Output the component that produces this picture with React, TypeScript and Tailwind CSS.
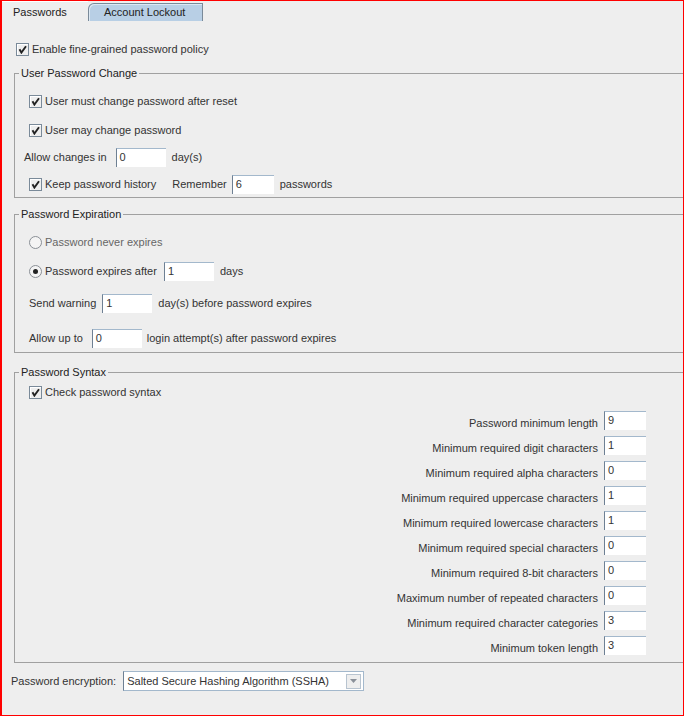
import React from 'react';

const Check = () => (
  <span className="w-[13px] h-[13px] shrink-0 border border-[#7a8a99] bg-[#eeeeee] flex items-center justify-center shadow-[inset_1px_1px_0_#ffffff]">
    <svg width="9" height="9" viewBox="0 0 9 9">
      <path d="M1.5 4.2 L3.4 7.6 L8 1.2" fill="none" stroke="#222" strokeWidth="1.9" />
    </svg>
  </span>
);

const Radio = ({ on }: { on?: boolean }) => (
  <span className="w-[13px] h-[13px] shrink-0 rounded-full border border-[#8a8f96] bg-[#f4f4f4] flex items-center justify-center">
    {on && <span className="w-[5px] h-[5px] rounded-full bg-[#222]" />}
  </span>
);

const Field = ({ value, w }: { value: string; w: string }) => (
  <div className={`${w} h-[19px] shrink-0 bg-white border-t border-l border-t-[#a3b8cc] border-l-[#6e8093] pl-[3px] flex items-center leading-none`}>
    {value}
  </div>
);

const Group = ({ title, className, children }: { title: string; className: string; children: React.ReactNode }) => (
  <fieldset className={`ml-[12px] border-l border-t border-b border-[#a0a0a0] ${className}`}>
    <legend className="ml-[4px] px-[2px] leading-[13px] text-[#222]">{title}</legend>
    {children}
  </fieldset>
);

const syntax = [
  ['Password minimum length', '9'],
  ['Minimum required digit characters', '1'],
  ['Minimum required alpha characters', '0'],
  ['Minimum required uppercase characters', '1'],
  ['Minimum required lowercase characters', '1'],
  ['Minimum required special characters', '0'],
  ['Minimum required 8-bit characters', '0'],
  ['Maximum number of repeated characters', '0'],
  ['Minimum required character categories', '3'],
  ['Minimum token length', '3'],
];

export default function App() {
  return (
    <div className="w-[684px] h-[716px] overflow-hidden bg-[#eeeeee] border-t border-r border-b border-l-2 border-[#ff0000] font-['Liberation_Sans',Arial,sans-serif] text-[11px] text-[#333]">
      {/* tabs */}
      <div className="flex items-end h-[20px]">
        <div className="w-[86px] h-[20px] border-t border-white flex items-center pl-[11px] pt-[2px] text-[#222]">Passwords</div>
        <div className="w-[115px] h-[18px] bg-[#b8cfe5] border-t border-l border-r border-[#7a8a99] rounded-tl-[6px] flex items-center pl-[15px] text-[#222] shadow-[inset_1px_1px_0_#dce8f3]">
          Account Lockout
        </div>
      </div>

      <div className="flex items-center h-[20px] mt-[18px] pl-[14px]">
        <Check />
        <span className="ml-[3px]">Enable fine-grained password policy</span>
      </div>

      <Group title="User Password Change" className="mt-[8px] pb-[3px]">
        <div className="flex items-center h-[20px] mt-[11px] pl-[14px]">
          <Check />
          <span className="ml-[3px]">User must change password after reset</span>
        </div>
        <div className="flex items-center h-[20px] mt-[9px] pl-[14px]">
          <Check />
          <span className="ml-[3px]">User may change password</span>
        </div>
        <div className="flex items-center h-[20px] mt-[7px] pl-[9px]">
          <span>Allow changes in</span>
          <span className="ml-[9px]"><Field value="0" w="w-[50px]" /></span>
          <span className="ml-[6px]">day(s)</span>
        </div>
        <div className="flex items-center h-[20px] mt-[7px] pl-[14px]">
          <Check />
          <span className="ml-[3px]">Keep password history</span>
          <span className="ml-[16px]">Remember</span>
          <span className="ml-[5px]"><Field value="6" w="w-[42px]" /></span>
          <span className="ml-[6px]">passwords</span>
        </div>
      </Group>

      <Group title="Password Expiration" className="mt-[10px] pb-[4px]">
        <div className="flex items-center h-[20px] mt-[11px] pl-[14px]">
          <Radio />
          <span className="ml-[3px] text-[#666]">Password never expires</span>
        </div>
        <div className="flex items-center h-[20px] mt-[9px] pl-[14px]">
          <Radio on />
          <span className="ml-[3px]">Password expires after</span>
          <span className="ml-[7px]"><Field value="1" w="w-[50px]" /></span>
          <span className="ml-[6px]">days</span>
        </div>
        <div className="flex items-center h-[20px] mt-[12px] pl-[14px]">
          <span>Send warning</span>
          <span className="ml-[6px]"><Field value="1" w="w-[50px]" /></span>
          <span className="ml-[6px]">day(s) before password expires</span>
        </div>
        <div className="flex items-center h-[20px] mt-[15px] pl-[14px]">
          <span>Allow up to</span>
          <span className="ml-[9px]"><Field value="0" w="w-[50px]" /></span>
          <span className="ml-[5px]">login attempt(s) after password expires</span>
        </div>
      </Group>

      <Group title="Password Syntax" className="mt-[13px] pb-[7px]">
        <div className="flex items-center h-[20px] mt-[3px] pl-[14px]">
          <Check />
          <span className="ml-[3px]">Check password syntax</span>
        </div>
        <div className="flex flex-col gap-[5px] mt-[8px] pr-[37px]">
          {syntax.map(([label, v]) => (
            <div key={label} className="flex items-center justify-end h-[20px]">
              <span className="mt-[7px]">{label}</span>
              <span className="ml-[6px]"><Field value={v} w="w-[42px]" /></span>
            </div>
          ))}
        </div>
      </Group>

      <div className="flex items-center h-[20px] mt-[8px] pl-[9px]">
        <span>Password encryption:</span>
        <div className="ml-[7px] w-[241px] h-[20px] bg-white border border-[#a3b8cc] border-l-[#6e8093] flex items-center pl-[3px]">
          <span className="flex-1">Salted Secure Hashing Algorithm (SSHA)</span>
          <span className="w-[15px] h-[15px] mr-[2px] bg-[#eeeeee] border border-[#b8c4d0] flex items-center justify-center">
            <svg width="7" height="4" viewBox="0 0 7 4"><path d="M0 0h7L3.5 4z" fill="#8a9099" /></svg>
          </span>
        </div>
      </div>
    </div>
  );
}
